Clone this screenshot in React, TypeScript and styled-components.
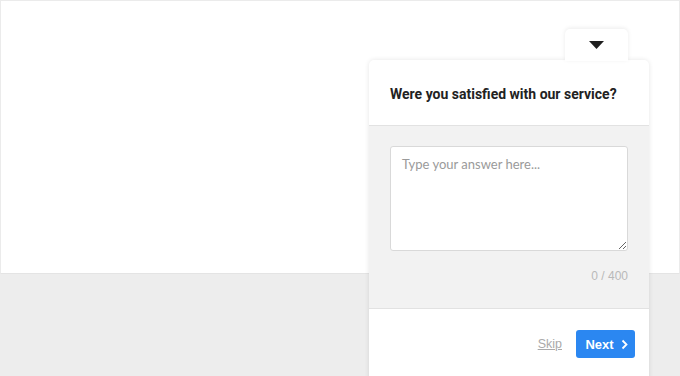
import styled, { createGlobalStyle } from 'styled-components';
import { useState } from 'react';

const GlobalStyle = createGlobalStyle`
  html, body {
    margin: 0;
    padding: 0;
    width: 680px;
    height: 376px;
    overflow: hidden;
    font-family: "Liberation Sans", Arial, sans-serif;
  }
`;

const Page = styled.div`
  position: relative;
  width: 680px;
  height: 376px;
  display: flex;
  flex-direction: column;
  overflow: hidden;
  background-color: #ededed;
`;

const Stage = styled.div`
  height: 272px;
  background-color: #ffffff;
  border: 1px solid #ebebeb;
  border-bottom-color: #e4e4e4;
`;

const Widget = styled.div`
  position: absolute;
  top: 29px;
  right: 31px;
  width: 280px;
  display: flex;
  flex-direction: column;
  align-items: flex-end;
`;

const Toggle = styled.button`
  width: 63px;
  height: 32px;
  margin-right: 21px;
  margin-bottom: -1px;
  padding: 0;
  border: none;
  border-radius: 5px 5px 0 0;
  background-color: #ffffff;
  box-shadow: 0 -1px 4px rgba(0, 0, 0, 0.08);
  display: flex;
  align-items: center;
  justify-content: center;
  cursor: pointer;
  position: relative;
  z-index: 2;
`;

const Card = styled.div`
  width: 280px;
  height: 330px;
  background-color: #ffffff;
  border-radius: 5px 5px 0 0;
  box-shadow: 0 0 5px rgba(0, 0, 0, 0.1);
  display: flex;
  flex-direction: column;
  overflow: hidden;
  position: relative;
  z-index: 1;
`;

const Header = styled.div`
  height: 65px;
  padding: 0 21px;
  display: flex;
  align-items: center;
  border-bottom: 1px solid #e2e2e2;
`;

const Question = styled.h2`
  margin: 2px 0 0;
  font-size: 14px;
  font-weight: 700;
  color: #222222;
  white-space: nowrap;
  font-family: Roboto, "Liberation Sans", Arial, sans-serif;
`;

const Body = styled.div`
  height: 183px;
  box-sizing: border-box;
  padding: 20px 21px 0;
  background-color: #f2f2f2;
  border-bottom: 1px solid #e2e2e2;
  display: flex;
  flex-direction: column;
`;

const Answer = styled.textarea`
  box-sizing: border-box;
  width: 238px;
  height: 105px;
  padding: 9px 11px;
  border: 1px solid #d9d9d9;
  border-radius: 3px;
  background-color: #ffffff;
  font-family: Lato, "Open Sans", sans-serif;
  font-size: 13px;
  color: #333333;
  outline: none;

  &::placeholder {
    color: #9a9a9a;
  }
`;

const Counter = styled.div`
  margin-top: 18px;
  text-align: right;
  font-size: 12px;
  color: #b9b9b9;
  font-family: "Liberation Sans", Arial, sans-serif;
`;

const Footer = styled.div`
  padding: 21px 14px 0 0;
  display: flex;
  justify-content: flex-end;
  align-items: center;
  gap: 14px;
`;

const SkipLink = styled.a`
  font-size: 12.5px;
  color: #aaaaaa;
  text-decoration: underline;
  cursor: pointer;
`;

const NextButton = styled.button`
  width: 59px;
  height: 28px;
  border: none;
  border-radius: 3px;
  background-color: #2b87f1;
  color: #ffffff;
  font-family: "Liberation Sans", Arial, sans-serif;
  font-weight: 700;
  font-size: 13px;
  display: flex;
  align-items: center;
  justify-content: center;
  gap: 7px;
  padding: 0 0 0 2px;
  cursor: pointer;
`;

export default function App() {
  const [text, setText] = useState('');

  return (
    <>
      <GlobalStyle />
      <Page>
        <Stage />
        <Widget>
          <Toggle aria-label="Collapse">
            <svg width="15" height="8" viewBox="0 0 15 8">
              <path d="M0 0 H15 L7.5 8 Z" fill="#1f1f1f" />
            </svg>
          </Toggle>
          <Card>
            <Header>
              <Question>Were you satisfied with our service?</Question>
            </Header>
            <Body>
              <Answer
                placeholder="Type your answer here..."
                value={text}
                maxLength={400}
                onChange={(e) => setText(e.target.value)}
              />
              <Counter>{text.length} / 400</Counter>
            </Body>
            <Footer>
              <SkipLink>Skip</SkipLink>
              <NextButton>
                Next
                <svg width="7" height="11" viewBox="0 0 7 11">
                  <path d="M1.5 1.5 L5.5 5.5 L1.5 9.5" fill="none" stroke="#ffffff" strokeWidth="1.8" />
                </svg>
              </NextButton>
            </Footer>
          </Card>
        </Widget>
      </Page>
    </>
  );
}
